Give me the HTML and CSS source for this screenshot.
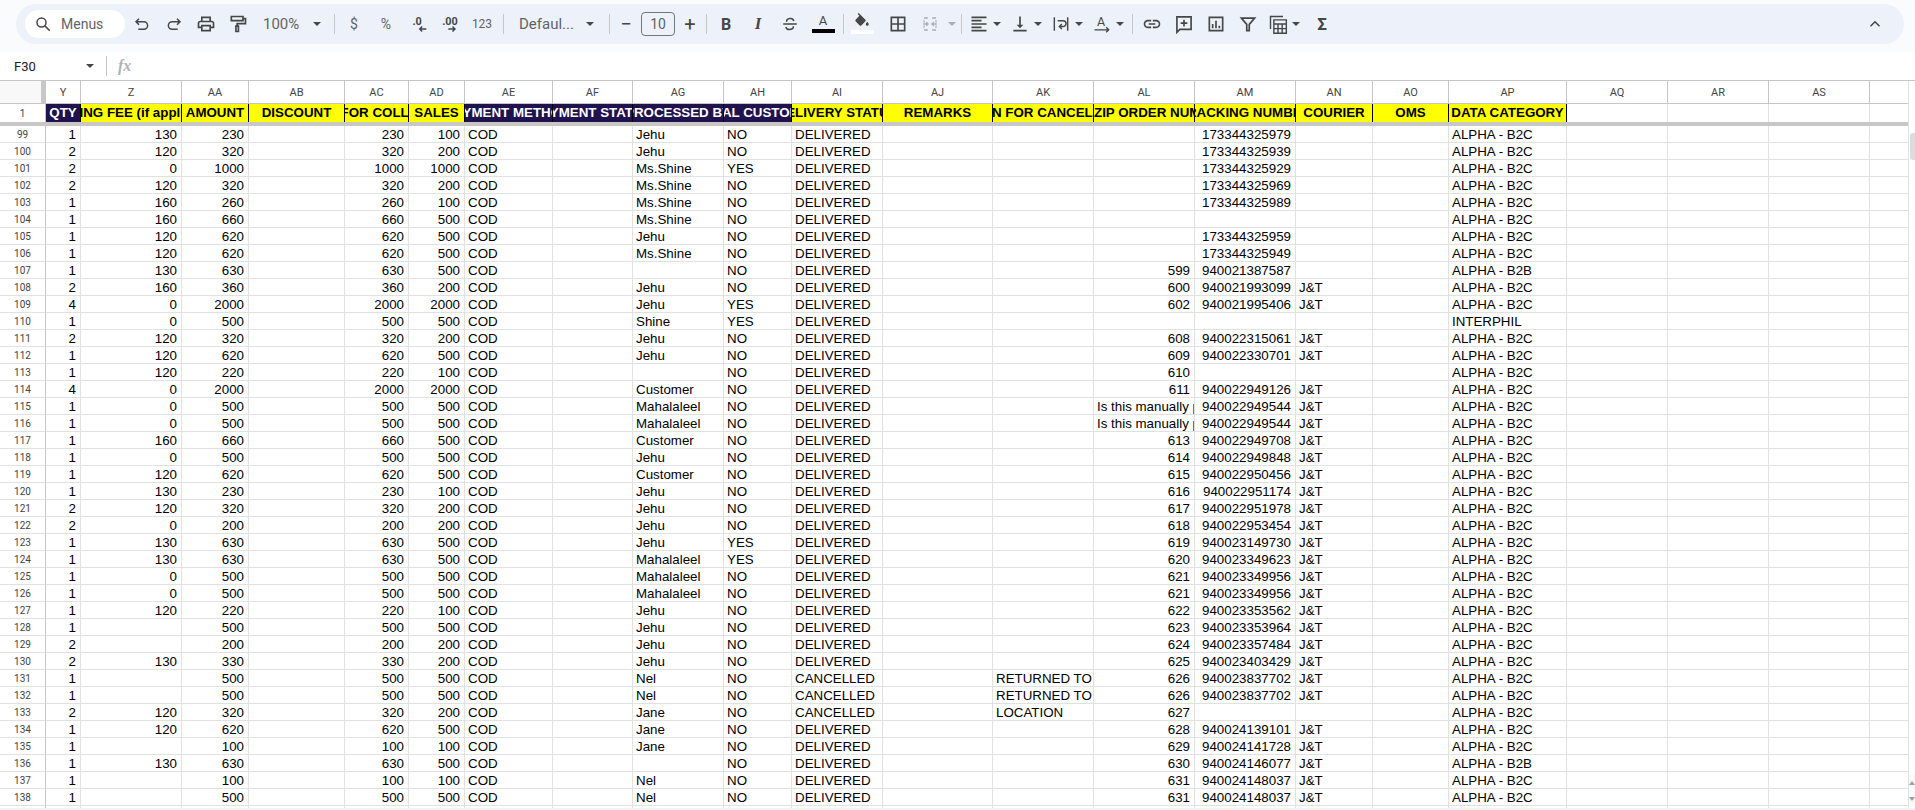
FILE: index.html
```html
<!doctype html>
<html>

<head>
    <title>orders</title>
    <meta charset="utf-8"/>
    <link rel="stylesheet" href="styles.css">
</head>

<body>
    <!-- toolbar -->
    <div class="top">
        <div class="toolbar">
            <div class="search">
                <svg class="ic" viewBox="0 0 24 24"><circle cx="10" cy="10" r="6" class="line"/><path d="M14.5 14.5L21 21" class="line"/></svg>
                <span>Menus</span>
            </div>
            <span class="btn"><svg class="ic" viewBox="0 0 24 24"><path d="M8 5L4 9l4 4M4 9h10.5a5 5 0 0 1 0 10H7" class="line"/></svg></span>
            <span class="btn"><svg class="ic" viewBox="0 0 24 24"><path d="M16 5l4 4-4 4M20 9H9.5a5 5 0 0 0 0 10H17" class="line"/></svg></span>
            <span class="btn"><svg class="ic big" viewBox="0 0 24 24"><path d="M19 8h-1V3H6v5H5c-1.66 0-3 1.34-3 3v6h4v4h12v-4h4v-6c0-1.66-1.34-3-3-3zM8 5h8v3H8V5zm8 14H8v-4h8v4zm2-4v-2H6v2H4v-4c0-.55.45-1 1-1h14c.55 0 1 .45 1 1v4h-2z"/></svg></span>
            <span class="btn"><svg class="ic big" viewBox="0 0 24 24"><path d="M4 3h14v5H4zM18 5.500h3v6H11v3M9.500 14.500h3v6.500h-3z" class="line"/></svg></span>
            <div class="pick zoom"><span>100%</span><i class="caret"></i></div>
            <i class="sep sep-a"></i>
            <span class="btn txt">$</span>
            <span class="btn txt">%</span>
            <span class="btn"><svg class="ic big" viewBox="0 0 24 24"><text x="11" y="13" class="dec">.0</text><path d="M22 18H14M17 15l-3 3 3 3" class="line thin"/></svg></span>
            <span class="btn"><svg class="ic big" viewBox="0 0 24 24"><text x="12" y="13" class="dec">.00</text><path d="M10 18h8M15 15l3 3-3 3" class="line thin"/></svg></span>
            <span class="btn txt small">123</span>
            <i class="sep sep-b"></i>
            <div class="pick font"><span>Defaul...</span><i class="caret"></i></div>
            <i class="sep sep-a"></i>
            <span class="btn pm">&#8722;</span>
            <span class="size">10</span>
            <span class="btn pm plus">+</span>
            <i class="sep sep-c"></i>
            <span class="btn bold">B</span>
            <span class="btn ital">I</span>
            <span class="btn"><svg class="ic" viewBox="0 0 24 24"><path d="M3 12h18M7.500 9C7 4 16 3 17 8M16.500 15c.5 5-9 6-10 1" class="line"/></svg></span>
            <span class="btn color"><span>A</span><i class="bar"></i></span>
            <i class="sep sep-d"></i>
            <span class="btn fill"><svg class="ic" viewBox="0 0 24 24"><path d="M16.560 8.940L7.620 0 6.210 1.410l2.380 2.380-5.150 5.150c-.59.59-.59 1.540 0 2.120l5.500 5.500c.59.59 1.530.59 2.120 0l5.500-5.500c.59-.58.59-1.530 0-2.120zM19 11.500s-2 2.170-2 3.500c0 1.100.9 2 2 2s2-.9 2-2c0-1.330-2-3.500-2-3.500z"/></svg><i class="bar white"></i></span>
            <span class="btn borders"><svg class="ic big" viewBox="0 0 24 24"><path d="M4 4h16v16H4zM12 4v16M4 12h16" class="line"/></svg></span>
            <span class="caret-btn merge off"><svg class="ic" viewBox="0 0 24 24"><path d="M4 4h5M4 20h5M15 4h5M15 20h5M4 7v3M4 14v3M20 7v3M20 14v3M3 12h6M7 9.500l2.500 2.500L7 14.500M21 12h-6M17 9.500L14.500 12l2.500 2.500" class="line thin"/></svg><i class="caret"></i></span>
            <i class="sep sep-e"></i>
            <span class="caret-btn"><svg class="ic big" viewBox="0 0 24 24"><path d="M15 15H3v2h12v-2zm0-8H3v2h12V7zM3 13h18v-2H3v2zm0 8h18v-2H3v2zM3 3v2h18V3H3z"/></svg><i class="caret"></i></span>
            <span class="caret-btn"><svg class="ic big" viewBox="0 0 24 24"><path d="M16 13h-3V3h-2v10H8l4 4 4-4zM4 19v2h16v-2H4z"/></svg><i class="caret"></i></span>
            <span class="caret-btn"><svg class="ic big" viewBox="0 0 24 24"><path d="M4 4v16M20 4v16M8 8h6.500a3.500 3.500 0 0 1 0 7H10M13 12l-3 3 3 3" class="line thin"/></svg><i class="caret"></i></span>
            <span class="caret-btn"><svg class="ic big" viewBox="0 0 24 24"><text x="11" y="14" class="rot">A</text><path d="M3 19h17M17 16l3 3-3 3" class="line thin"/></svg><i class="caret"></i></span>
            <i class="sep sep-e"></i>
            <span class="btn"><svg class="ic big" viewBox="0 0 24 24"><path d="M3.900 12c0-1.710 1.390-3.100 3.100-3.100h4V7H7c-2.760 0-5 2.240-5 5s2.240 5 5 5h4v-1.900H7c-1.710 0-3.100-1.390-3.100-3.100zM8 13h8v-2H8v2zm9-6h-4v1.900h4c1.710 0 3.100 1.390 3.100 3.100s-1.390 3.100-3.100 3.100h-4V17h4c2.760 0 5-2.240 5-5s-2.240-5-5-5z"/></svg></span>
            <span class="btn"><svg class="ic big" viewBox="0 0 24 24"><path d="M3.500 3.500h17v15H7l-3.500 3.500zM12 7v8M8 11h8" class="line"/></svg></span>
            <span class="btn"><svg class="ic big" viewBox="0 0 24 24"><path d="M4 4h16v16H4zM8 12v5M12 8v9M16 14v3" class="line"/></svg></span>
            <span class="btn"><svg class="ic big" viewBox="0 0 24 24"><path d="M4 5h16l-6.500 7.500V20h-3v-7.500z" class="line"/></svg></span>
            <span class="caret-btn calc"><svg class="ic big" viewBox="0 0 24 24"><path d="M3 18V3h15M7 7h15v16H7zM7 12h15M12 12v11M17 12v11M7 17.500h15" class="line thin"/></svg><i class="caret"></i></span>
            <span class="btn sigma">&#931;</span>
            <span class="btn collapse"><svg class="ic" viewBox="0 0 24 24"><path d="M6 15l6-6 6 6" class="line"/></svg></span>
        </div>
    </div>

    <!-- formula bar -->
    <div class="formula">
        <span class="cell-name">F30</span>
        <i class="caret"></i>
        <i class="sep"></i>
        <span class="fx">fx</span>
    </div>

    <!-- sheet -->
    <div class="sheet">
        <div class="grid">
            <table>
                <colgroup>
                    <col class="w46"><col class="w35"><col class="w101"><col class="w67"><col class="w96"><col class="w64"><col class="w56"><col class="w88"><col class="w80"><col class="w91"><col class="w68"><col class="w91"><col class="w110"><col class="w101"><col class="w101"><col class="w101"><col class="w77"><col class="w76"><col class="w118"><col class="w101"><col class="w101"><col class="w101"><col class="w39">
                </colgroup>
                <thead>
                    <tr class="letters">
                        <th class="corner"></th><th>Y</th><th>Z</th><th>AA</th><th>AB</th><th>AC</th><th>AD</th><th>AE</th><th>AF</th><th>AG</th><th>AH</th><th>AI</th><th>AJ</th><th>AK</th><th>AL</th><th>AM</th><th>AN</th><th>AO</th><th>AP</th><th>AQ</th><th>AR</th><th>AS</th><th></th>
                    </tr>
                    <tr class="heads">
                        <th class="rn">1</th>
                        <td class="dark"><div class="hd"><span>QTY</span></div></td>
                        <td class="yel"><div class="hd"><span>SHIPPING FEE (if applicable)</span></div></td>
                        <td class="yel"><div class="hd"><span>AMOUNT</span></div></td>
                        <td class="yel"><div class="hd"><span>DISCOUNT</span></div></td>
                        <td class="yel"><div class="hd"><span>TOTAL FOR COLLECTION</span></div></td>
                        <td class="yel"><div class="hd"><span>SALES</span></div></td>
                        <td class="dark"><div class="hd"><span>PAYMENT METHOD</span></div></td>
                        <td class="dark"><div class="hd"><span>PAYMENT STATUS</span></div></td>
                        <td class="dark"><div class="hd"><span>PROCESSED BY</span></div></td>
                        <td class="dark"><div class="hd"><span>LOYAL CUSTOMER</span></div></td>
                        <td class="yel"><div class="hd"><span>DELIVERY STATUS</span></div></td>
                        <td class="yel"><div class="hd"><span>REMARKS</span></div></td>
                        <td class="yel"><div class="hd"><span>REASON FOR CANCELLATION</span></div></td>
                        <td class="yel"><div class="hd start"><span>ZIP ORDER NUMBER</span></div></td>
                        <td class="yel"><div class="hd"><span>TRACKING NUMBER</span></div></td>
                        <td class="yel"><div class="hd"><span>COURIER</span></div></td>
                        <td class="yel"><div class="hd"><span>OMS</span></div></td>
                        <td class="yel"><div class="hd"><span>DATA CATEGORY</span></div></td>
                        <td></td><td></td><td></td><td></td>
                    </tr>
                    <tr class="freeze"><td colspan="23"></td></tr>
                </thead>
                <tbody>
                    <tr><th class="rn">99</th><td class="n">1</td><td class="n">130</td><td class="n">230</td><td></td><td class="n">230</td><td class="n">100</td><td>COD</td><td></td><td>Jehu</td><td>NO</td><td>DELIVERED</td><td></td><td></td><td></td><td class="n">173344325979</td><td></td><td></td><td>ALPHA - B2C</td><td></td><td></td><td></td><td></td></tr>
                    <tr><th class="rn">100</th><td class="n">2</td><td class="n">120</td><td class="n">320</td><td></td><td class="n">320</td><td class="n">200</td><td>COD</td><td></td><td>Jehu</td><td>NO</td><td>DELIVERED</td><td></td><td></td><td></td><td class="n">173344325939</td><td></td><td></td><td>ALPHA - B2C</td><td></td><td></td><td></td><td></td></tr>
                    <tr><th class="rn">101</th><td class="n">2</td><td class="n">0</td><td class="n">1000</td><td></td><td class="n">1000</td><td class="n">1000</td><td>COD</td><td></td><td>Ms.Shine</td><td>YES</td><td>DELIVERED</td><td></td><td></td><td></td><td class="n">173344325929</td><td></td><td></td><td>ALPHA - B2C</td><td></td><td></td><td></td><td></td></tr>
                    <tr><th class="rn">102</th><td class="n">2</td><td class="n">120</td><td class="n">320</td><td></td><td class="n">320</td><td class="n">200</td><td>COD</td><td></td><td>Ms.Shine</td><td>NO</td><td>DELIVERED</td><td></td><td></td><td></td><td class="n">173344325969</td><td></td><td></td><td>ALPHA - B2C</td><td></td><td></td><td></td><td></td></tr>
                    <tr><th class="rn">103</th><td class="n">1</td><td class="n">160</td><td class="n">260</td><td></td><td class="n">260</td><td class="n">100</td><td>COD</td><td></td><td>Ms.Shine</td><td>NO</td><td>DELIVERED</td><td></td><td></td><td></td><td class="n">173344325989</td><td></td><td></td><td>ALPHA - B2C</td><td></td><td></td><td></td><td></td></tr>
                    <tr><th class="rn">104</th><td class="n">1</td><td class="n">160</td><td class="n">660</td><td></td><td class="n">660</td><td class="n">500</td><td>COD</td><td></td><td>Ms.Shine</td><td>NO</td><td>DELIVERED</td><td></td><td></td><td></td><td></td><td></td><td></td><td>ALPHA - B2C</td><td></td><td></td><td></td><td></td></tr>
                    <tr><th class="rn">105</th><td class="n">1</td><td class="n">120</td><td class="n">620</td><td></td><td class="n">620</td><td class="n">500</td><td>COD</td><td></td><td>Jehu</td><td>NO</td><td>DELIVERED</td><td></td><td></td><td></td><td class="n">173344325959</td><td></td><td></td><td>ALPHA - B2C</td><td></td><td></td><td></td><td></td></tr>
                    <tr><th class="rn">106</th><td class="n">1</td><td class="n">120</td><td class="n">620</td><td></td><td class="n">620</td><td class="n">500</td><td>COD</td><td></td><td>Ms.Shine</td><td>NO</td><td>DELIVERED</td><td></td><td></td><td></td><td class="n">173344325949</td><td></td><td></td><td>ALPHA - B2C</td><td></td><td></td><td></td><td></td></tr>
                    <tr><th class="rn">107</th><td class="n">1</td><td class="n">130</td><td class="n">630</td><td></td><td class="n">630</td><td class="n">500</td><td>COD</td><td></td><td></td><td>NO</td><td>DELIVERED</td><td></td><td></td><td class="n">599</td><td class="n">940021387587</td><td></td><td></td><td>ALPHA - B2B</td><td></td><td></td><td></td><td></td></tr>
                    <tr><th class="rn">108</th><td class="n">2</td><td class="n">160</td><td class="n">360</td><td></td><td class="n">360</td><td class="n">200</td><td>COD</td><td></td><td>Jehu</td><td>NO</td><td>DELIVERED</td><td></td><td></td><td class="n">600</td><td class="n">940021993099</td><td>J&amp;T</td><td></td><td>ALPHA - B2C</td><td></td><td></td><td></td><td></td></tr>
                    <tr><th class="rn">109</th><td class="n">4</td><td class="n">0</td><td class="n">2000</td><td></td><td class="n">2000</td><td class="n">2000</td><td>COD</td><td></td><td>Jehu</td><td>YES</td><td>DELIVERED</td><td></td><td></td><td class="n">602</td><td class="n">940021995406</td><td>J&amp;T</td><td></td><td>ALPHA - B2C</td><td></td><td></td><td></td><td></td></tr>
                    <tr><th class="rn">110</th><td class="n">1</td><td class="n">0</td><td class="n">500</td><td></td><td class="n">500</td><td class="n">500</td><td>COD</td><td></td><td>Shine</td><td>YES</td><td>DELIVERED</td><td></td><td></td><td></td><td></td><td></td><td></td><td>INTERPHIL</td><td></td><td></td><td></td><td></td></tr>
                    <tr><th class="rn">111</th><td class="n">2</td><td class="n">120</td><td class="n">320</td><td></td><td class="n">320</td><td class="n">200</td><td>COD</td><td></td><td>Jehu</td><td>NO</td><td>DELIVERED</td><td></td><td></td><td class="n">608</td><td class="n">940022315061</td><td>J&amp;T</td><td></td><td>ALPHA - B2C</td><td></td><td></td><td></td><td></td></tr>
                    <tr><th class="rn">112</th><td class="n">1</td><td class="n">120</td><td class="n">620</td><td></td><td class="n">620</td><td class="n">500</td><td>COD</td><td></td><td>Jehu</td><td>NO</td><td>DELIVERED</td><td></td><td></td><td class="n">609</td><td class="n">940022330701</td><td>J&amp;T</td><td></td><td>ALPHA - B2C</td><td></td><td></td><td></td><td></td></tr>
                    <tr><th class="rn">113</th><td class="n">1</td><td class="n">120</td><td class="n">220</td><td></td><td class="n">220</td><td class="n">100</td><td>COD</td><td></td><td></td><td>NO</td><td>DELIVERED</td><td></td><td></td><td class="n">610</td><td></td><td></td><td></td><td>ALPHA - B2C</td><td></td><td></td><td></td><td></td></tr>
                    <tr><th class="rn">114</th><td class="n">4</td><td class="n">0</td><td class="n">2000</td><td></td><td class="n">2000</td><td class="n">2000</td><td>COD</td><td></td><td>Customer</td><td>NO</td><td>DELIVERED</td><td></td><td></td><td class="n">611</td><td class="n">940022949126</td><td>J&amp;T</td><td></td><td>ALPHA - B2C</td><td></td><td></td><td></td><td></td></tr>
                    <tr><th class="rn">115</th><td class="n">1</td><td class="n">0</td><td class="n">500</td><td></td><td class="n">500</td><td class="n">500</td><td>COD</td><td></td><td>Mahalaleel</td><td>NO</td><td>DELIVERED</td><td></td><td></td><td>Is this manually processed?</td><td class="n">940022949544</td><td>J&amp;T</td><td></td><td>ALPHA - B2C</td><td></td><td></td><td></td><td></td></tr>
                    <tr><th class="rn">116</th><td class="n">1</td><td class="n">0</td><td class="n">500</td><td></td><td class="n">500</td><td class="n">500</td><td>COD</td><td></td><td>Mahalaleel</td><td>NO</td><td>DELIVERED</td><td></td><td></td><td>Is this manually processed?</td><td class="n">940022949544</td><td>J&amp;T</td><td></td><td>ALPHA - B2C</td><td></td><td></td><td></td><td></td></tr>
                    <tr><th class="rn">117</th><td class="n">1</td><td class="n">160</td><td class="n">660</td><td></td><td class="n">660</td><td class="n">500</td><td>COD</td><td></td><td>Customer</td><td>NO</td><td>DELIVERED</td><td></td><td></td><td class="n">613</td><td class="n">940022949708</td><td>J&amp;T</td><td></td><td>ALPHA - B2C</td><td></td><td></td><td></td><td></td></tr>
                    <tr><th class="rn">118</th><td class="n">1</td><td class="n">0</td><td class="n">500</td><td></td><td class="n">500</td><td class="n">500</td><td>COD</td><td></td><td>Jehu</td><td>NO</td><td>DELIVERED</td><td></td><td></td><td class="n">614</td><td class="n">940022949848</td><td>J&amp;T</td><td></td><td>ALPHA - B2C</td><td></td><td></td><td></td><td></td></tr>
                    <tr><th class="rn">119</th><td class="n">1</td><td class="n">120</td><td class="n">620</td><td></td><td class="n">620</td><td class="n">500</td><td>COD</td><td></td><td>Customer</td><td>NO</td><td>DELIVERED</td><td></td><td></td><td class="n">615</td><td class="n">940022950456</td><td>J&amp;T</td><td></td><td>ALPHA - B2C</td><td></td><td></td><td></td><td></td></tr>
                    <tr><th class="rn">120</th><td class="n">1</td><td class="n">130</td><td class="n">230</td><td></td><td class="n">230</td><td class="n">100</td><td>COD</td><td></td><td>Jehu</td><td>NO</td><td>DELIVERED</td><td></td><td></td><td class="n">616</td><td class="n">940022951174</td><td>J&amp;T</td><td></td><td>ALPHA - B2C</td><td></td><td></td><td></td><td></td></tr>
                    <tr><th class="rn">121</th><td class="n">2</td><td class="n">120</td><td class="n">320</td><td></td><td class="n">320</td><td class="n">200</td><td>COD</td><td></td><td>Jehu</td><td>NO</td><td>DELIVERED</td><td></td><td></td><td class="n">617</td><td class="n">940022951978</td><td>J&amp;T</td><td></td><td>ALPHA - B2C</td><td></td><td></td><td></td><td></td></tr>
                    <tr><th class="rn">122</th><td class="n">2</td><td class="n">0</td><td class="n">200</td><td></td><td class="n">200</td><td class="n">200</td><td>COD</td><td></td><td>Jehu</td><td>NO</td><td>DELIVERED</td><td></td><td></td><td class="n">618</td><td class="n">940022953454</td><td>J&amp;T</td><td></td><td>ALPHA - B2C</td><td></td><td></td><td></td><td></td></tr>
                    <tr><th class="rn">123</th><td class="n">1</td><td class="n">130</td><td class="n">630</td><td></td><td class="n">630</td><td class="n">500</td><td>COD</td><td></td><td>Jehu</td><td>YES</td><td>DELIVERED</td><td></td><td></td><td class="n">619</td><td class="n">940023149730</td><td>J&amp;T</td><td></td><td>ALPHA - B2C</td><td></td><td></td><td></td><td></td></tr>
                    <tr><th class="rn">124</th><td class="n">1</td><td class="n">130</td><td class="n">630</td><td></td><td class="n">630</td><td class="n">500</td><td>COD</td><td></td><td>Mahalaleel</td><td>YES</td><td>DELIVERED</td><td></td><td></td><td class="n">620</td><td class="n">940023349623</td><td>J&amp;T</td><td></td><td>ALPHA - B2C</td><td></td><td></td><td></td><td></td></tr>
                    <tr><th class="rn">125</th><td class="n">1</td><td class="n">0</td><td class="n">500</td><td></td><td class="n">500</td><td class="n">500</td><td>COD</td><td></td><td>Mahalaleel</td><td>NO</td><td>DELIVERED</td><td></td><td></td><td class="n">621</td><td class="n">940023349956</td><td>J&amp;T</td><td></td><td>ALPHA - B2C</td><td></td><td></td><td></td><td></td></tr>
                    <tr><th class="rn">126</th><td class="n">1</td><td class="n">0</td><td class="n">500</td><td></td><td class="n">500</td><td class="n">500</td><td>COD</td><td></td><td>Mahalaleel</td><td>NO</td><td>DELIVERED</td><td></td><td></td><td class="n">621</td><td class="n">940023349956</td><td>J&amp;T</td><td></td><td>ALPHA - B2C</td><td></td><td></td><td></td><td></td></tr>
                    <tr><th class="rn">127</th><td class="n">1</td><td class="n">120</td><td class="n">220</td><td></td><td class="n">220</td><td class="n">100</td><td>COD</td><td></td><td>Jehu</td><td>NO</td><td>DELIVERED</td><td></td><td></td><td class="n">622</td><td class="n">940023353562</td><td>J&amp;T</td><td></td><td>ALPHA - B2C</td><td></td><td></td><td></td><td></td></tr>
                    <tr><th class="rn">128</th><td class="n">1</td><td class="n"></td><td class="n">500</td><td></td><td class="n">500</td><td class="n">500</td><td>COD</td><td></td><td>Jehu</td><td>NO</td><td>DELIVERED</td><td></td><td></td><td class="n">623</td><td class="n">940023353964</td><td>J&amp;T</td><td></td><td>ALPHA - B2C</td><td></td><td></td><td></td><td></td></tr>
                    <tr><th class="rn">129</th><td class="n">2</td><td class="n"></td><td class="n">200</td><td></td><td class="n">200</td><td class="n">200</td><td>COD</td><td></td><td>Jehu</td><td>NO</td><td>DELIVERED</td><td></td><td></td><td class="n">624</td><td class="n">940023357484</td><td>J&amp;T</td><td></td><td>ALPHA - B2C</td><td></td><td></td><td></td><td></td></tr>
                    <tr><th class="rn">130</th><td class="n">2</td><td class="n">130</td><td class="n">330</td><td></td><td class="n">330</td><td class="n">200</td><td>COD</td><td></td><td>Jehu</td><td>NO</td><td>DELIVERED</td><td></td><td></td><td class="n">625</td><td class="n">940023403429</td><td>J&amp;T</td><td></td><td>ALPHA - B2C</td><td></td><td></td><td></td><td></td></tr>
                    <tr><th class="rn">131</th><td class="n">1</td><td class="n"></td><td class="n">500</td><td></td><td class="n">500</td><td class="n">500</td><td>COD</td><td></td><td>Nel</td><td>NO</td><td>CANCELLED</td><td></td><td>RETURNED TO LOCATION</td><td class="n">626</td><td class="n">940023837702</td><td>J&amp;T</td><td></td><td>ALPHA - B2C</td><td></td><td></td><td></td><td></td></tr>
                    <tr><th class="rn">132</th><td class="n">1</td><td class="n"></td><td class="n">500</td><td></td><td class="n">500</td><td class="n">500</td><td>COD</td><td></td><td>Nel</td><td>NO</td><td>CANCELLED</td><td></td><td>RETURNED TO LOCATION</td><td class="n">626</td><td class="n">940023837702</td><td>J&amp;T</td><td></td><td>ALPHA - B2C</td><td></td><td></td><td></td><td></td></tr>
                    <tr><th class="rn">133</th><td class="n">2</td><td class="n">120</td><td class="n">320</td><td></td><td class="n">320</td><td class="n">200</td><td>COD</td><td></td><td>Jane</td><td>NO</td><td>CANCELLED</td><td></td><td>LOCATION</td><td class="n">627</td><td></td><td></td><td></td><td>ALPHA - B2C</td><td></td><td></td><td></td><td></td></tr>
                    <tr><th class="rn">134</th><td class="n">1</td><td class="n">120</td><td class="n">620</td><td></td><td class="n">620</td><td class="n">500</td><td>COD</td><td></td><td>Jane</td><td>NO</td><td>DELIVERED</td><td></td><td></td><td class="n">628</td><td class="n">940024139101</td><td>J&amp;T</td><td></td><td>ALPHA - B2C</td><td></td><td></td><td></td><td></td></tr>
                    <tr><th class="rn">135</th><td class="n">1</td><td class="n"></td><td class="n">100</td><td></td><td class="n">100</td><td class="n">100</td><td>COD</td><td></td><td>Jane</td><td>NO</td><td>DELIVERED</td><td></td><td></td><td class="n">629</td><td class="n">940024141728</td><td>J&amp;T</td><td></td><td>ALPHA - B2C</td><td></td><td></td><td></td><td></td></tr>
                    <tr><th class="rn">136</th><td class="n">1</td><td class="n">130</td><td class="n">630</td><td></td><td class="n">630</td><td class="n">500</td><td>COD</td><td></td><td></td><td>NO</td><td>DELIVERED</td><td></td><td></td><td class="n">630</td><td class="n">940024146077</td><td>J&amp;T</td><td></td><td>ALPHA - B2B</td><td></td><td></td><td></td><td></td></tr>
                    <tr><th class="rn">137</th><td class="n">1</td><td class="n"></td><td class="n">100</td><td></td><td class="n">100</td><td class="n">100</td><td>COD</td><td></td><td>Nel</td><td>NO</td><td>DELIVERED</td><td></td><td></td><td class="n">631</td><td class="n">940024148037</td><td>J&amp;T</td><td></td><td>ALPHA - B2C</td><td></td><td></td><td></td><td></td></tr>
                    <tr><th class="rn">138</th><td class="n">1</td><td class="n"></td><td class="n">500</td><td></td><td class="n">500</td><td class="n">500</td><td>COD</td><td></td><td>Nel</td><td>NO</td><td>DELIVERED</td><td></td><td></td><td class="n">631</td><td class="n">940024148037</td><td>J&amp;T</td><td></td><td>ALPHA - B2C</td><td></td><td></td><td></td><td></td></tr>
                    <tr><th class="rn"></th><td></td><td></td><td></td><td></td><td></td><td></td><td></td><td></td><td></td><td></td><td></td><td></td><td></td><td></td><td></td><td></td><td></td><td></td><td></td><td></td><td></td><td></td></tr>
                </tbody>
            </table>
        </div>
        <div class="vscroll">
            <div class="thumb"></div>
            <div class="arrows">
                <i class="arrow-up"></i>
                <i class="arrow-down"></i>
            </div>
        </div>
    </div>
    <div class="bottom"></div>
</body>

</html>
```

FILE: styles.css
```css
*{padding:0;margin:0;box-sizing:border-box;}
html,body{height:100%;}
body{
    width:1915px;
    height:810px;
    display:flex;
    flex-direction:column;
    overflow:hidden;
    background:#fff;
    font-family:Roboto, sans-serif;
    color:#444746;
}
i{display:block;font-style:normal;}

/* toolbar */
.top{
    height:52px;
    flex:none;
    padding:4px 11px 8px 16px;
    background:#f9fbfd;
}
.toolbar{
    height:40px;
    display:flex;
    align-items:center;
    padding:0 13px 0 9px;
    background:#edf2fa;
    border-radius:20px;
}
.search{
    width:100px;
    height:28px;
    margin-right:1px;
    flex:none;
    display:flex;
    align-items:center;
    gap:9px;
    padding-left:9px;
    background:#fff;
    border-radius:14px;
    font-size:14px;
    color:#5f6368;
}
.ic{width:18px;height:18px;fill:#444746;flex:none;}
.ic.big{width:20px;height:20px;}
.line{fill:none;stroke:#444746;stroke-width:2;}
.line.thin{stroke-width:1.700;}
.dec{font:bold 13px Roboto, sans-serif;text-anchor:middle;fill:#444746;}
.rot{font:15px Roboto, sans-serif;text-anchor:middle;fill:#444746;}
.btn{
    width:32px;
    height:32px;
    flex:none;
    display:flex;
    align-items:center;
    justify-content:center;
    font-size:14px;
}
.txt{color:#5f6368;font-size:14px;}
.small{font-size:12px;}
.pm{font-size:20px;}
.plus{margin-left:-1px;}
.bold{font-weight:bold;font-size:16px;}
.ital{font:italic bold 17px "Liberation Serif", serif;}
.color{position:relative;margin-left:1px;flex-direction:column;font-size:13px;padding-bottom:3px;}
.bar{width:23px;height:4px;background:#000;margin-top:1px;}
.bar.white{background:#fff;margin-top:-1px;}
.fill{flex-direction:column;padding-bottom:1px;}
.borders{margin-left:4px;}
.sigma{font-size:17px;font-weight:bold;}
.collapse{margin-left:auto;}
.caret{
    width:0;
    height:0;
    flex:none;
    border-top:4.500px solid #444746;
    border-left:4.500px solid transparent;
    border-right:4.500px solid transparent;
}
.pick{
    height:32px;
    flex:none;
    display:flex;
    align-items:center;
    justify-content:space-between;
    font-size:15px;
    color:#5f6368;
}
.zoom{width:72px;padding:0 5px 0 9px;}
.font{width:94px;padding:0 7px 0 12px;}
.sep{width:1px;height:20px;background:#c7c7c7;flex:none;}
.sep-a{margin:0 0 0 8px;}
.sep-a + .btn.txt{margin-left:3px;}
.sep-b{margin:0 3px 0 5px;}
.sep-c{margin:0 3px 0 0;}
.sep-d{margin:0 2px 0 4px;}
.sep-e{margin:0 3px 0 3px;}
.size{
    width:34px;
    height:24px;
    margin-left:-1px;
    flex:none;
    display:flex;
    align-items:center;
    justify-content:center;
    border:1px solid #747775;
    border-radius:4px;
    font-size:14px;
    color:#5f6368;
}
.caret-btn{
    width:41px;
    height:32px;
    flex:none;
    display:flex;
    align-items:center;
    gap:4px;
    padding-left:4px;
}
.merge{width:44px;padding-left:7px;gap:9px;opacity:.4;}
.calc{width:42px;}

/* formula bar */
.formula{
    height:29px;
    flex:none;
    display:flex;
    align-items:center;
    padding-left:14px;
    border-bottom:1px solid #c7c7c7;
    font-size:13px;
    color:#202124;
}
.formula .cell-name{width:72px;}
.formula .sep{margin:0 11px 0 12px;}
.fx{font:italic bold 16px "Liberation Serif", serif;color:#b0b3b6;}

/* sheet */
.sheet{
    flex:1;
    min-height:0;
    display:flex;
    overflow:hidden;
}
.grid{
    width:1909px;
    flex:none;
    overflow:hidden;
    border-right:1px solid #e1e1e1;
}
table{
    width:1909px;
    table-layout:fixed;
    border-collapse:separate;
    border-spacing:0;
    font:13.330px "Liberation Sans", Arial, sans-serif;
    color:#000;
}
td,th{
    height:17px;
    padding:0 3px;
    overflow:hidden;
    white-space:nowrap;
    border-right:1px solid #e1e1e1;
    border-bottom:1px solid #e1e1e1;
    line-height:15px;
    vertical-align:bottom;
    font-weight:normal;
}
td.n{text-align:right;padding-right:4px;}

.letters th{
    height:23px;
    padding:0;
    vertical-align:middle;
    text-align:center;
    font:11px Roboto, sans-serif;
    color:#444;
    border-right-color:#c7c7c7;
    border-bottom-color:#c7c7c7;
}
.letters .corner{background:#f8f8f8;border-right:5px solid #c7c7c7;}
.rn{
    padding:0;
    text-align:center;
    vertical-align:middle;
    font:10px Roboto, sans-serif;
    color:#444;
    border-right-color:#c7c7c7;
}
.heads td,.heads th{height:18px;border-bottom:0;}
.heads td{padding:0;vertical-align:middle;}
.heads .dark,.heads .yel{border-right-color:#000;}
.heads .dark{background:#20124d;color:#fff;}
.heads .yel{background:#ff0;}
.hd{
    display:flex;
    justify-content:center;
    overflow:hidden;
    font-weight:bold;
    line-height:18px;
}
.hd span{flex:none;}
.hd.start{justify-content:flex-start;}
.freeze td{height:4px;padding:0;background:#c7c7c7;border:0;}

/* col widths */
.w35{width:35px;}
.w39{width:39px;}
.w46{width:46px;}
.w56{width:56px;}
.w64{width:64px;}
.w67{width:67px;}
.w68{width:68px;}
.w76{width:76px;}
.w77{width:77px;}
.w80{width:80px;}
.w88{width:88px;}
.w91{width:91px;}
.w96{width:96px;}
.w101{width:101px;}
.w110{width:110px;}
.w118{width:118px;}

/* scrollbar */
.vscroll{
    flex:1;
    display:flex;
    flex-direction:column;
    background:#fff;
}
.thumb{
    width:5px;
    height:27px;
    margin:52px 0 0 1px;
    background:#dadce0;
    border-radius:3px 0 0 3px;
}
.arrows{
    height:32px;
    margin-top:auto;
    margin-bottom:1px;
    display:flex;
    flex-direction:column;
    align-items:center;
    justify-content:space-around;
    background:#f8f9fa;
}
.arrow-up{border-bottom:4px solid #9aa0a6;border-left:3px solid transparent;border-right:3px solid transparent;}
.arrow-down{border-top:4px solid #9aa0a6;border-left:3px solid transparent;border-right:3px solid transparent;}
.bottom{height:2px;flex:none;background:#f1f3f4;}
```
